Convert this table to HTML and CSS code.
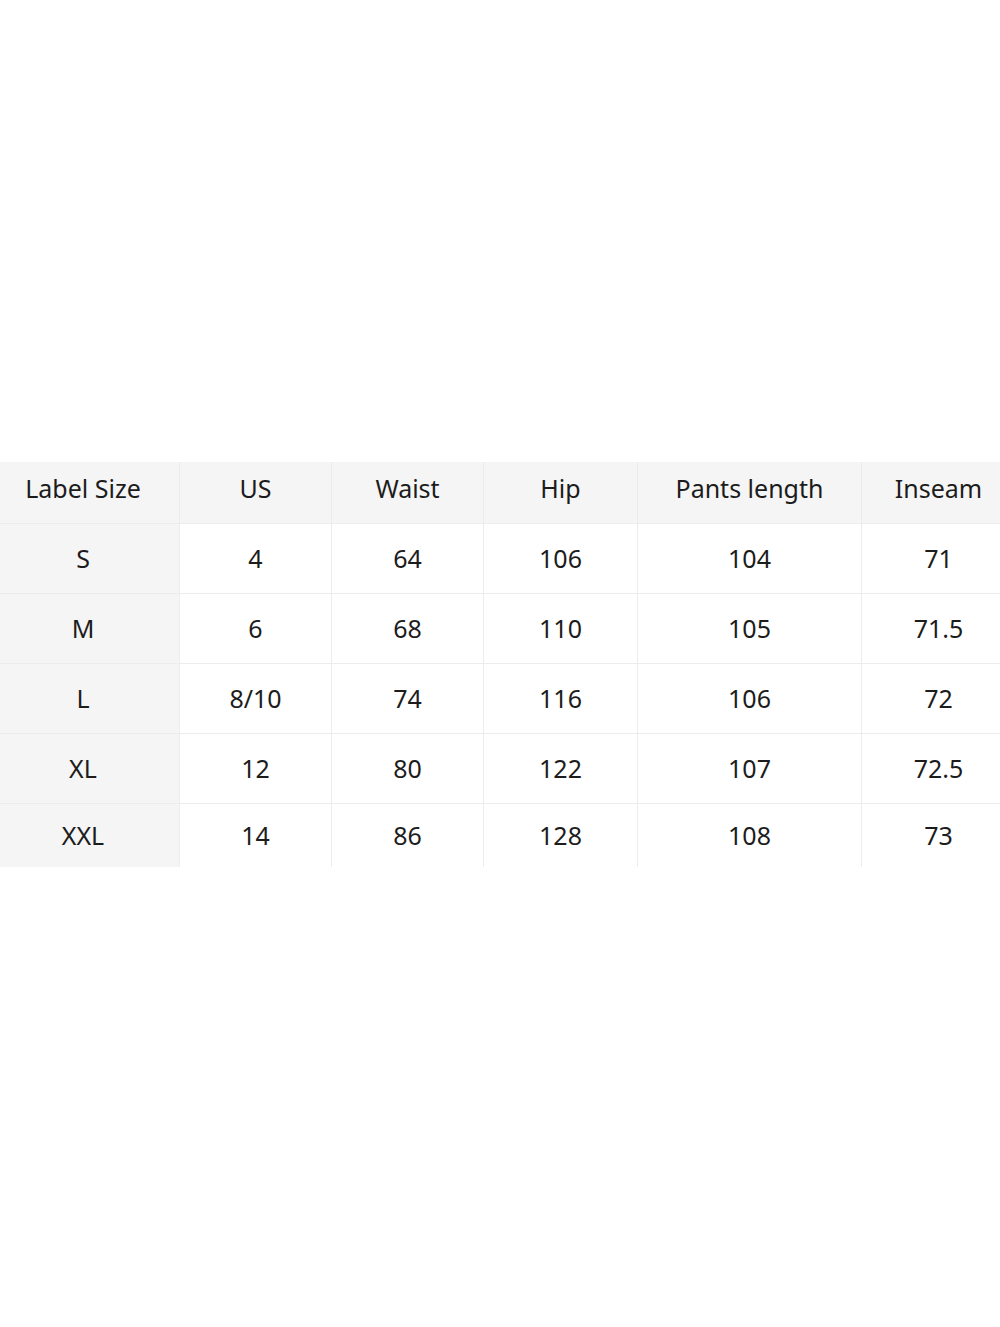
FILE: index.html
```
<!DOCTYPE html>
<html>
<head>
<meta charset="utf-8">
<link rel="stylesheet" href="styles.css">
</head>
<body>
<div class="page">
  <div class="chart">
    <div class="row head">
      <div class="cell first">Label Size</div>
      <div class="cell">US</div>
      <div class="cell">Waist</div>
      <div class="cell">Hip</div>
      <div class="cell">Pants length</div>
      <div class="cell end">Inseam</div>
    </div>
    <div class="row">
      <div class="cell first">S</div><div class="cell">4</div><div class="cell">64</div><div class="cell">106</div><div class="cell">104</div><div class="cell end">71</div>
    </div>
    <div class="row">
      <div class="cell first">M</div><div class="cell">6</div><div class="cell">68</div><div class="cell">110</div><div class="cell">105</div><div class="cell end">71.5</div>
    </div>
    <div class="row">
      <div class="cell first">L</div><div class="cell">8/10</div><div class="cell">74</div><div class="cell">116</div><div class="cell">106</div><div class="cell end">72</div>
    </div>
    <div class="row">
      <div class="cell first">XL</div><div class="cell">12</div><div class="cell">80</div><div class="cell">122</div><div class="cell">107</div><div class="cell end">72.5</div>
    </div>
    <div class="row last">
      <div class="cell first">XXL</div><div class="cell">14</div><div class="cell">86</div><div class="cell">128</div><div class="cell">108</div><div class="cell end">73</div>
    </div>
  </div>
</div>
</body>
</html>
```
FILE: styles.css
```
html, body {
  margin: 0;
  padding: 0;
  background: #ffffff;
}
.page {
  height: 1327px;
  padding-top: 462px;
  box-sizing: border-box;
  font-family: "Noto Sans", "Open Sans", sans-serif;
  color: #1c1c1c;
}
.chart {
  width: 1000px;
}
.row {
  display: grid;
  grid-template-columns: 179px 152px 152px 154px 224px 139px;
  height: 70px;
  border-top: 1px solid #ececec;
  box-sizing: border-box;
}
.row.head {
  height: 61px;
  border-top: none;
  background: #f5f5f5;
}
.row.head .cell {
  padding-bottom: 10px;
}
.row.last {
  height: 64px;
}
.cell {
  display: flex;
  align-items: center;
  justify-content: center;
  font-size: 25px;
  border-left: 1px solid #ececec;
  padding-bottom: 2px;
  box-sizing: border-box;
}
.cell.first {
  border-left: none;
  background: #f5f5f5;
  padding-right: 13px;
}
.cell.end {
  padding-left: 15px;
}
```
